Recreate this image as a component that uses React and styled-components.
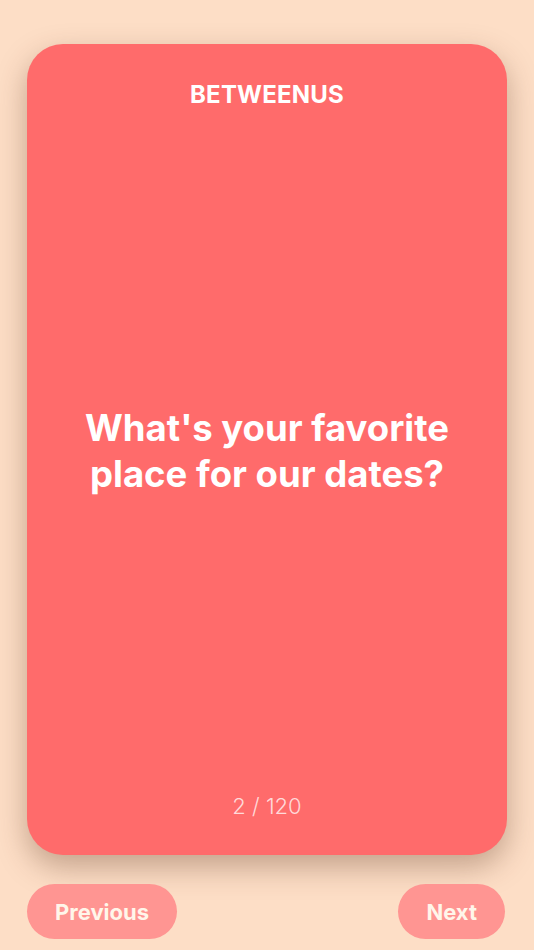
import React, { useState } from 'react'
import styled, { createGlobalStyle } from 'styled-components'

const GlobalStyle = createGlobalStyle`
  html, body {
    margin: 0;
    padding: 0;
    background: #fddec6;
    font-family: Inter, "Liberation Sans", sans-serif;
  }
  * { box-sizing: border-box; }
`

const Page = styled.div`
  height: 100vh;
  display: flex;
  flex-direction: column;
  padding: 44px 27px 11px;
`

const Card = styled.div`
  flex: 1;
  display: flex;
  flex-direction: column;
  align-items: center;
  background: #ff6b6b;
  border-radius: 36px;
  box-shadow: 0 12px 30px rgba(90, 50, 30, 0.35);
  padding: 36px 32px 35px;
  color: #fff;
`

const Brand = styled.div`
  font-size: 24px;
  font-weight: 700;
  line-height: 1.21;
  letter-spacing: 0.2px;
`

const Question = styled.div`
  flex: 1;
  display: flex;
  align-items: center;
  justify-content: center;
  text-align: center;
  font-size: 36.5px;
  font-weight: 700;
  line-height: 46px;
  padding-bottom: 0;
`

const Counter = styled.div`
  font-size: 22px;
  font-weight: 300;
  line-height: 1.21;
  color: rgba(255, 255, 255, 0.75);
`

const Controls = styled.div`
  display: flex;
  justify-content: space-between;
  margin-top: 29px;
  padding-right: 2px;
`

const NavButton = styled.button`
  height: 55px;
  padding: 0 28px;
  border: none;
  border-radius: 28px;
  background: #ff9592;
  color: #fff6ea;
  font-family: Inter, "Liberation Sans", sans-serif;
  font-size: 22px;
  font-weight: 700;
  cursor: pointer;
`

const questions = [
  "What's your first memory of us?",
  "What's your favorite place for our dates?",
  "What song reminds you of me?",
]

export default function App() {
  const [index, setIndex] = useState(1)
  const total = 120

  return (
    <Page>
      <GlobalStyle />
      <Card>
        <Brand>BETWEENUS</Brand>
        <Question>{questions[index % questions.length]}</Question>
        <Counter>{index + 1} / {total}</Counter>
      </Card>
      <Controls>
        <NavButton onClick={() => setIndex((i) => Math.max(0, i - 1))}>Previous</NavButton>
        <NavButton onClick={() => setIndex((i) => Math.min(total - 1, i + 1))}>Next</NavButton>
      </Controls>
    </Page>
  )
}
